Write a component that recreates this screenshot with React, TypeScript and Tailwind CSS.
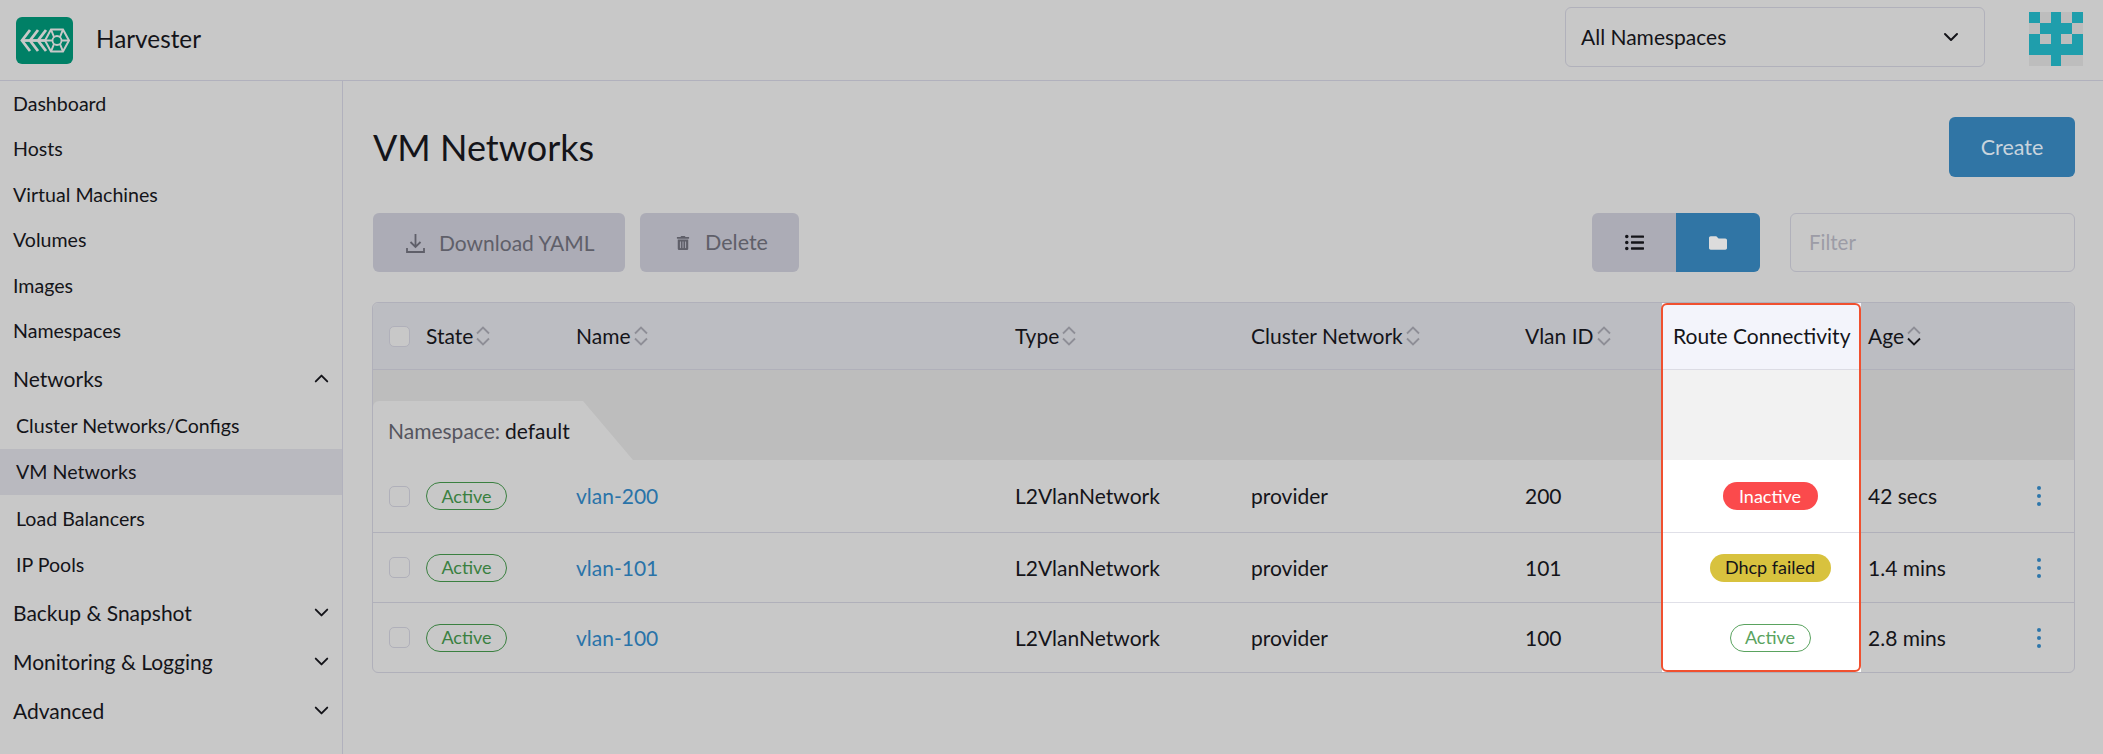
import React from "react";
import { ChevronDown, ChevronUp } from "lucide-react";
import { FaFolder, FaListUl, FaTrashAlt } from "react-icons/fa";

// ── Shared bits ─────────────────────────────────────────────

const ROW_GRID = "grid grid-cols-[53px_150px_439px_236px_274px_137px_199px_159px_54px]";

const topLinks = ["Dashboard", "Hosts", "Virtual Machines", "Volumes", "Images", "Namespaces"];
const networkLinks = ["Cluster Networks/Configs", "VM Networks", "Load Balancers", "IP Pools"];
const closedGroups = ["Backup & Snapshot", "Monitoring & Logging", "Advanced"];

const networks = [
  { name: "vlan-200", vlan: "200", route: "inactive", age: "42 secs" },
  { name: "vlan-101", vlan: "101", route: "dhcp", age: "1.4 mins" },
  { name: "vlan-100", vlan: "100", route: "active", age: "2.8 mins" },
];

function HarvesterLogo() {
  return (
    <svg width="57" height="47" viewBox="0 0 57 47" className="shrink-0">
      <rect width="57" height="47" rx="6" fill="#008066" />
      <g fill="none" stroke="#c8c8c8" strokeWidth="2.8">
        <path d="M14 13 L6 23.5 L14 34" />
        <path d="M22 13 L14 23.5 L22 34" />
        <path d="M30 13 L22 23.5 L30 34" />
        <path d="M6 23.5 H30" />
      </g>
      <g fill="none" stroke="#c8c8c8" strokeWidth="2">
        <path d="M53 23.5 L47 12.5 H35 L29 23.5 L35 34.5 H47 Z" />
        <path d="M35 12.5 L38 20 M47 12.5 L44 20 M35 34.5 L38 27 M47 34.5 L44 27 M29 23.5 H36 M46 23.5 H53" />
      </g>
      <circle cx="41" cy="23.5" r="4.5" fill="#008066" stroke="#c8c8c8" strokeWidth="1.8" />
    </svg>
  );
}

function Avatar() {
  const cells = ["10101", "01110", "10101", "11111", "00100"];
  return (
    <svg width="54" height="54" viewBox="0 0 50 50" className="shrink-0" shapeRendering="crispEdges">
      <rect width="50" height="50" fill="#bdbdbd" />
      {cells.map((row, y) =>
        row.split("").map((c, x) =>
          c === "1" ? <rect key={`${x}-${y}`} x={x * 10} y={y * 10} width="10" height="10" fill="#1f9eac" /> : null
        )
      )}
    </svg>
  );
}

function SortIcon({ active }: { active?: boolean }) {
  return (
    <svg width="14" height="20" viewBox="0 0 14 20" fill="none" strokeWidth="1.8" className="shrink-0">
      <path d="M1 7.5 L7 1.5 L13 7.5" stroke="#8e8e96" />
      <path d="M1 12.5 L7 18.5 L13 12.5" stroke={active ? "#141419" : "#8e8e96"} />
    </svg>
  );
}

function Kebab() {
  return (
    <svg width="4" height="20" viewBox="0 0 4 20" fill="#2d76ab">
      <circle cx="2" cy="2" r="2" />
      <circle cx="2" cy="10" r="2" />
      <circle cx="2" cy="18" r="2" />
    </svg>
  );
}

function Checkbox() {
  return <span className="block w-[21px] h-[21px] rounded-[5px] border border-[#b0b0ba] bg-[#c8c8c8]" />;
}

function ActivePill({ dim }: { dim?: boolean }) {
  return (
    <span
      className={
        dim
          ? "inline-flex items-center h-[28px] w-[81px] justify-center rounded-full border border-[#3a8040] text-[18px] text-[#3a8040]"
          : "inline-flex items-center h-[28px] w-[81px] justify-center rounded-full border border-[#5aa35f] text-[18px] text-[#5aa35f]"
      }
    >
      Active
    </span>
  );
}

function RoutePill({ state }: { state: string }) {
  if (state === "inactive") {
    return (
      <span className="inline-flex items-center justify-center h-[28px] w-[95px] rounded-full bg-[#fb4a4c] text-[18px] text-white">
        Inactive
      </span>
    );
  }
  if (state === "dhcp") {
    return (
      <span className="inline-flex items-center justify-center h-[28px] w-[121px] rounded-full bg-[#d8c23e] text-[18px] text-[#141419]">
        Dhcp failed
      </span>
    );
  }
  return <ActivePill />;
}

// ── Sidebar ─────────────────────────────────────────────────

function Sidebar() {
  return (
    <nav className="w-[343px] shrink-0 border-r border-[#b1b1bd] text-[19.6px] text-[#141419]">
      <div className="flex flex-col">
        {topLinks.map((label) => (
          <div key={label} className="h-[45.4px] pl-[13px] flex items-center">
            {label}
          </div>
        ))}
      </div>
      <div className="h-[47px] mt-[2px] pl-[13px] pr-[9px] flex items-center justify-between text-[21px]">
        Networks
        <ChevronUp size={23} strokeWidth={2} />
      </div>
      <div className="flex flex-col">
        {networkLinks.map((label) => (
          <div
            key={label}
            className={
              label === "VM Networks"
                ? "h-[46.5px] pl-[16px] flex items-center bg-[#b9b9bf]"
                : "h-[46.5px] pl-[16px] flex items-center"
            }
          >
            {label}
          </div>
        ))}
      </div>
      <div className="flex flex-col">
        {closedGroups.map((label) => (
          <div key={label} className="h-[49px] pl-[13px] pr-[9px] flex items-center justify-between text-[21px]">
            {label}
            <ChevronDown size={23} strokeWidth={2} />
          </div>
        ))}
      </div>
    </nav>
  );
}

// ── Table ───────────────────────────────────────────────────

function NetworkTable() {
  const header = ["State", "Name", "Type", "Cluster Network", "Vlan ID"];
  return (
    <div className="relative rounded-[6px] border border-[#b0b0ba] text-[21px] text-[#141419]">
      {/* Header */}
      <div className={`${ROW_GRID} h-[67px] bg-[#bcbdc2] rounded-t-[6px] border-b border-[#b0b0ba]`}>
        <div className="flex items-center pl-[16px]">
          <Checkbox />
        </div>
        {header.map((h) => (
          <div key={h} className="flex items-center gap-[3px] pb-px">
            {h}
            <SortIcon />
          </div>
        ))}
        <div className="flex items-center pl-[11px] pb-px -mb-px bg-[#f3f4fb] border-b border-[#dcdce4] whitespace-nowrap">
          Route Connectivity
        </div>
        <div className="flex items-center gap-[3px] pl-[7px] pb-px">
          Age
          <SortIcon active />
        </div>
        <div />
      </div>

      {/* Namespace group */}
      <div className={`${ROW_GRID} h-[90px] bg-[#bdbdbd]`}>
        <div className="col-span-6 flex items-end">
          <div className="w-[260px] h-[59px] pl-[15px] flex items-center rounded-tl-[6px] bg-[#c8c8c8] whitespace-nowrap [clip-path:polygon(0_0,210px_0,100%_100%,0_100%)]">
            <span className="text-[#55555e]">Namespace:</span>
            <span className="ml-[5px]">default</span>
          </div>
        </div>
        <div className="bg-[#f2f2f2]" />
        <div className="col-span-2" />
      </div>

      {/* Rows */}
      {networks.map((n, i) => (
        <div
          key={n.name}
          className={
            i === 0
              ? `${ROW_GRID} h-[72px]`
              : `${ROW_GRID} h-[70px] border-t border-[#b0b0ba]`
          }
        >
          <div className="flex items-center pl-[16px]">
            <Checkbox />
          </div>
          <div className="flex items-center">
            <ActivePill dim />
          </div>
          <div className="flex items-center text-[#2a73a8]">{n.name}</div>
          <div className="flex items-center">L2VlanNetwork</div>
          <div className="flex items-center">provider</div>
          <div className="flex items-center">{n.vlan}</div>
          <div className={i === 0 ? "flex items-center justify-center pl-[17px] bg-white" : "flex items-center justify-center pl-[17px] bg-white -mt-px border-t border-[#e0e0e8]"}>
            <RoutePill state={n.route} />
          </div>
          <div className="flex items-center pl-[7px]">{n.age}</div>
          <div className="flex items-center pl-[17px]">
            <Kebab />
          </div>
        </div>
      ))}

      {/* Highlight around the Route Connectivity column */}
      <div className="absolute left-[1288px] top-0 bottom-0 w-[200px] rounded-[6px] border-2 border-[#f0502f] pointer-events-none" />
    </div>
  );
}

// ── Page ────────────────────────────────────────────────────

export default function App() {
  return (
    <div className="w-full h-screen flex flex-col overflow-hidden bg-[#c8c8c8] text-[#141419] [font-family:Lato,sans-serif]">
      {/* Top bar */}
      <header className="h-[81px] shrink-0 flex items-center border-b border-[#b1b1bd] pl-[16px] pr-[20px]">
        <HarvesterLogo />
        <span className="ml-[23px] mb-[2px] text-[24.3px]">Harvester</span>
        <div className="ml-auto mb-[6px] w-[420px] h-[60px] flex items-center justify-between rounded-[6px] border border-[#b1b1bb] pl-[15px] pr-[21px] text-[21px]">
          All Namespaces
          <ChevronDown size={24} strokeWidth={2} />
        </div>
        <div className="ml-[44px] mb-[2px]">
          <Avatar />
        </div>
      </header>

      <div className="flex-1 flex min-h-0">
        <Sidebar />

        <main className="flex-1 min-w-0 pt-[36px] pl-[29px] pr-[28px]">
          {/* Title */}
          <div className="h-[60px] pl-px flex items-center justify-between">
            <h1 className="text-[36px] text-[#141419]">VM Networks</h1>
            <button className="w-[126px] h-[60px] rounded-[6px] bg-[#3075a5] text-[21.5px] text-[#c8d4dd]">Create</button>
          </div>

          {/* Toolbar */}
          <div className="mt-[36px] h-[59px] pl-px flex items-stretch justify-between">
            <div className="flex gap-[15px]">
              <button className="w-[252px] flex items-center pl-[33px] gap-[14px] rounded-[6px] bg-[#acacb6] text-[21px] text-[#5f5f69]">
                <svg width="19" height="20" viewBox="0 0 19 20" fill="none" stroke="#5f5f69" strokeWidth="1.8">
                  <path d="M9.5 1 V14 M4.5 9 L9.5 14 L14.5 9 M1 15 V19 H18 V15" />
                </svg>
                Download YAML
              </button>
              <button className="w-[159px] flex items-center pl-[36px] gap-[15px] rounded-[6px] bg-[#acacb6] text-[21.5px] text-[#5f5f69]">
                <FaTrashAlt size={14} />
                Delete
              </button>
            </div>
            <div className="flex gap-[30px]">
              <div className="flex w-[168px] rounded-[6px] overflow-hidden">
                <div className="flex-1 flex items-center justify-center bg-[#acacb6] text-[#141419]">
                  <FaListUl size={19} />
                </div>
                <div className="flex-1 flex items-center justify-center bg-[#3075a5] text-[#dcdcdc]">
                  <FaFolder size={18} />
                </div>
              </div>
              <div className="w-[285px] flex items-center rounded-[6px] border border-[#b1b1bb] pl-[18px] pb-px text-[20.5px] text-[#9c9ca6]">
                Filter
              </div>
            </div>
          </div>

          <div className="mt-[30px]">
            <NetworkTable />
          </div>
        </main>
      </div>
    </div>
  );
}
